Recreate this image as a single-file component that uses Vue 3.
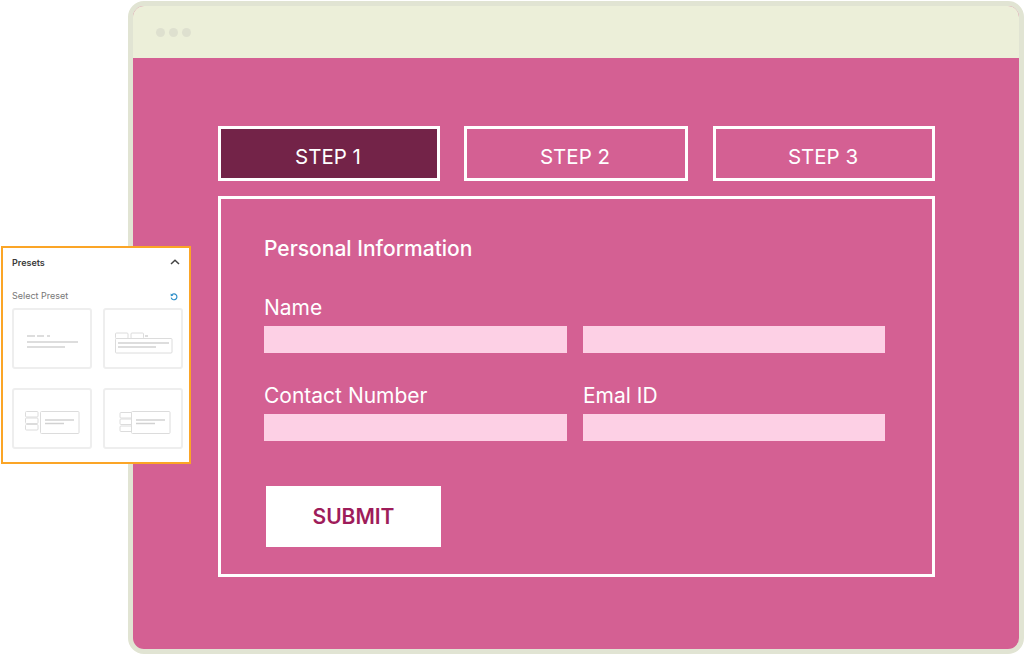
<template>
  <div class="page">
    <div class="window">
      <div class="titlebar">
        <span class="dot"></span>
        <span class="dot"></span>
        <span class="dot"></span>
      </div>
      <div class="content">
        <div class="steps">
          <div
            v-for="(step, i) in steps"
            :key="step"
            class="step"
            :class="{ active: i === 0 }"
          >
            {{ step }}
          </div>
        </div>
        <div class="form">
          <h2>Personal Information</h2>
          <div class="fields">
            <div class="field">
              <label>Name</label>
              <div class="input"></div>
            </div>
            <div class="field">
              <label>&nbsp;</label>
              <div class="input"></div>
            </div>
            <div class="field">
              <label>Contact Number</label>
              <div class="input"></div>
            </div>
            <div class="field">
              <label>Emal ID</label>
              <div class="input"></div>
            </div>
          </div>
          <div class="submit">SUBMIT</div>
        </div>
      </div>
    </div>

    <div class="presets">
      <div class="presets-head">
        <span>Presets</span>
        <svg width="10" height="6" viewBox="0 0 10 6">
          <path d="M1 5 L5 1.2 L9 5" fill="none" stroke="#444" stroke-width="1.5" />
        </svg>
      </div>
      <div class="presets-sub">
        <span>Select Preset</span>
        <svg class="reset" width="8" height="8" viewBox="0 0 8 8">
          <path d="M1.6 2.2 A2.9 2.9 0 1 1 1.2 4.6" fill="none" stroke="#2f8fc9" stroke-width="1.2" />
          <path d="M0.6 0.4 L0.8 3.2 L3.4 2.8 Z" fill="#2f8fc9" />
        </svg>
      </div>
      <div class="thumbs">
        <div class="thumb">
          <svg width="76" height="57" viewBox="2 2 76 57">
            <g class="bar">
              <path d="M15 28 H23 M25 28 H32 M35 28 H38" />
              <path d="M15 34 H66 M15 39 H53" />
            </g>
          </svg>
        </div>
        <div class="thumb">
          <svg width="76" height="57" viewBox="2 2 76 57">
            <g class="box">
              <rect x="12.5" y="25" width="12.5" height="5.5" rx="1" />
              <rect x="28" y="25" width="12.5" height="5.5" rx="1" />
              <rect x="12.5" y="30.5" width="56.5" height="14.5" rx="1" />
            </g>
            <g class="bar">
              <path d="M42 28 H45 M15 35 H66 M15 39 H53" />
            </g>
          </svg>
        </div>
        <div class="thumb">
          <svg width="76" height="57" viewBox="2 2 76 57">
            <g class="box">
              <rect x="13.5" y="23.5" width="12.5" height="5.5" rx="1" />
              <rect x="13.5" y="30" width="12.5" height="5.5" rx="1" />
              <rect x="13.5" y="36.5" width="12.5" height="5.5" rx="1" />
              <rect x="28.5" y="23.5" width="38.5" height="22" rx="1" />
            </g>
            <g class="bar">
              <path d="M33 32 H62 M33 35.5 H52" />
            </g>
          </svg>
        </div>
        <div class="thumb">
          <svg width="76" height="57" viewBox="2 2 76 57">
            <g class="box">
              <rect x="17" y="24.5" width="12" height="5.5" rx="1" />
              <rect x="17" y="31" width="12" height="5.5" rx="1" />
              <rect x="17" y="38" width="12" height="5.5" rx="1" />
              <rect x="28.5" y="23.5" width="38.5" height="22" rx="1" fill="#fff" />
            </g>
            <g class="bar">
              <path d="M33 32 H62 M33 35.5 H52" />
            </g>
          </svg>
        </div>
      </div>
    </div>
  </div>
</template>

<script setup>
const steps = ["STEP 1", "STEP 2", "STEP 3"];
</script>

<style>
html,
body {
  margin: 0;
  background: #fff;
}
</style>

<style scoped>
.page {
  position: relative;
  width: 1024px;
  height: 654px;
  overflow: hidden;
  padding: 1px 0 0 128px;
  box-sizing: border-box;
  font-family: Inter, "Open Sans", sans-serif;
}

.window {
  height: 653px;
  box-sizing: border-box;
  border: 5px solid #e1e4d3;
  border-radius: 16px;
  background: #d46093;
  overflow: hidden;
  display: flex;
  flex-direction: column;
}

.titlebar {
  height: 52px;
  background: #ecefd9;
  display: flex;
  align-items: center;
  gap: 4px;
  padding: 0 0 0 23px;
  flex-shrink: 0;
}

.dot {
  width: 9px;
  height: 9px;
  border-radius: 50%;
  background: #dee0cf;
}

.content {
  padding: 68px 84px 0 85px;
}

.steps {
  display: flex;
  justify-content: space-between;
}

.step {
  width: 222px;
  height: 55px;
  box-sizing: border-box;
  border: 3px solid #fff;
  padding: 5px 2px 0 0;
  display: flex;
  align-items: center;
  justify-content: center;
  color: #fff;
  font-size: 20.5px;
}

.step:nth-child(2) {
  width: 224px;
  margin-left: -1px;
}

.step.active {
  background: #732348;
}

.form {
  margin-top: 15px;
  height: 381px;
  box-sizing: border-box;
  border: 3px solid #fff;
  padding: 36px 47px 0 43px;
  color: #fff;
}

h2 {
  margin: 0;
  font-size: 21px;
  line-height: 28px;
  font-weight: 500;
}

.fields {
  margin-top: 31px;
  display: grid;
  grid-template-columns: 303px 302px;
  column-gap: 16px;
  row-gap: 29px;
}

.field label {
  display: block;
  font-size: 21px;
  line-height: 28px;
  margin-bottom: 4px;
}

.input {
  height: 27px;
  background: #fdd0e5;
}

.submit {
  margin: 45px 0 0 2px;
  width: 175px;
  height: 61px;
  background: #fff;
  color: #9e1c5a;
  font-size: 21px;
  font-weight: 600;
  display: flex;
  align-items: center;
  justify-content: center;
}

.presets {
  position: absolute;
  left: 1px;
  top: 246px;
  width: 190px;
  height: 218px;
  box-sizing: border-box;
  border: 2px solid #fba526;
  background: #fff;
  padding: 0 6px 0 9px;
}

.presets-head {
  display: flex;
  align-items: center;
  justify-content: space-between;
  height: 28px;
  padding-right: 3px;
  font-size: 9px;
  font-weight: 600;
  color: #3a3a3a;
}

.presets-sub {
  display: flex;
  align-items: center;
  justify-content: space-between;
  margin-top: 12px;
  height: 14px;
  padding-right: 5px;
  font-size: 9px;
  color: #777;
}

.reset {
  margin-top: 3px;
}

.thumbs {
  margin-top: 6px;
  display: grid;
  grid-template-columns: 80px 80px;
  column-gap: 11px;
  row-gap: 19px;
}

.thumb {
  width: 80px;
  height: 61px;
  box-sizing: border-box;
  border: 2px solid #eeeeee;
  border-radius: 3px;
}

.thumb svg {
  display: block;
}

.box {
  fill: none;
  stroke: #dcdcdc;
  stroke-width: 1;
}

.bar {
  fill: none;
  stroke: #d2d2d2;
  stroke-width: 1.4;
}
</style>
